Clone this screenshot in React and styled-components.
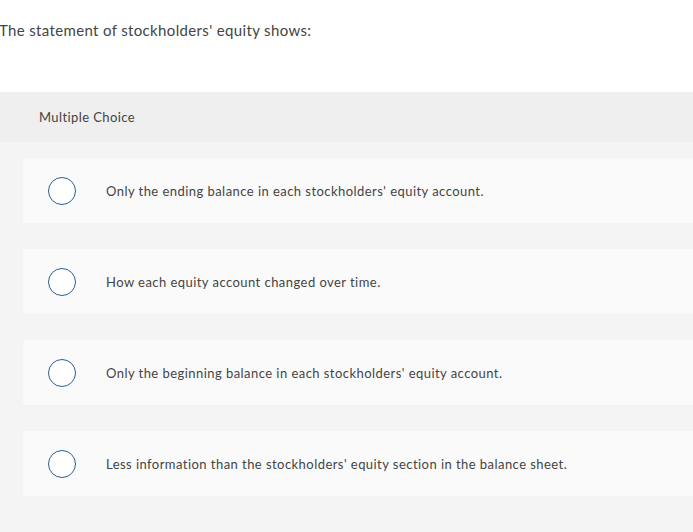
import React from 'react';
import styled, {createGlobalStyle} from 'styled-components';

const GlobalStyle = createGlobalStyle`
body {
  margin: 0;
  background: #fff;
  font-family: Lato, "Open Sans", sans-serif;
  color: #444;
}
`;

const options = [
    'Only the ending balance in each stockholders\' equity account.',
    'How each equity account changed over time.',
    'Only the beginning balance in each stockholders\' equity account.',
    'Less information than the stockholders\' equity section in the balance sheet.',
];

const App = () => {
    return (
        <Page>
            <GlobalStyle />
            <Question>The statement of stockholders' equity shows:</Question>
            <Header>Multiple Choice</Header>
            <Choices>
                {options.map((text, i) => (
                    <Card key={i}>
                        <Radio />
                        <Label>{text}</Label>
                    </Card>
                ))}
            </Choices>
        </Page>
    );
};

export default App;

const Page = styled.div`
width: 693px;
height: 532px;
overflow: hidden;
display: flex;
flex-direction: column;
`;

const Question = styled.div`
height: 92px;
box-sizing: border-box;
padding: 20px 0 0 0;
margin-left: -1px;
font-size: 15px;
line-height: 20px;
letter-spacing: 0.35px;
color: #444;
`;

const Header = styled.div`
height: 50px;
box-sizing: border-box;
background: #efefef;
padding: 0 0 0 39px;
display: flex;
align-items: center;
font-size: 13px;
letter-spacing: 0.4px;
color: #444;
`;

const Choices = styled.div`
flex: 1;
background: #f4f4f4;
padding: 16px 0 0 23px;
display: flex;
flex-direction: column;
gap: 26px;
`;

const Card = styled.div`
height: 65px;
margin-right: -10px;
background: #fafafa;
border-radius: 3px;
display: flex;
align-items: center;
padding-left: 25px;
`;

const Radio = styled.span`
width: 28px;
height: 28px;
box-sizing: border-box;
border: 1.5px solid #2b5d9a;
border-radius: 50%;
background: #fff;
flex-shrink: 0;
`;

const Label = styled.span`
margin-left: 30px;
font-size: 13px;
letter-spacing: 0.45px;
color: #444;
`;
